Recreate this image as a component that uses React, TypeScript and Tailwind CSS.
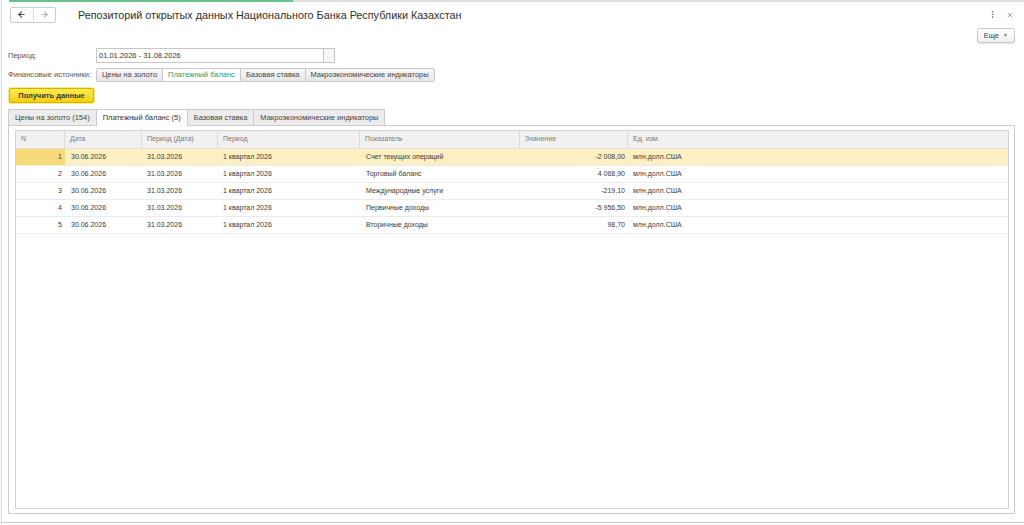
import React from 'react';
import { ArrowLeft, ArrowRight, EllipsisVertical, X } from 'lucide-react';

const sources = ['Цены на золото', 'Платежный баланс', 'Базовая ставка', 'Макроэкономические индикаторы'];

const tabs = ['Цены на золото (154)', 'Платежный баланс (5)', 'Базовая ставка', 'Макроэкономические индикаторы'];

const rows = [
  { n: 1, date: '30.06.2026', pdate: '31.03.2026', period: '1 квартал 2026', name: 'Счет текущих операций', value: '-2 008,00' },
  { n: 2, date: '30.06.2026', pdate: '31.03.2026', period: '1 квартал 2026', name: 'Торговый баланс', value: '4 068,90' },
  { n: 3, date: '30.06.2026', pdate: '31.03.2026', period: '1 квартал 2026', name: 'Международные услуги', value: '-219,10' },
  { n: 4, date: '30.06.2026', pdate: '31.03.2026', period: '1 квартал 2026', name: 'Первичные доходы', value: '-5 956,50' },
  { n: 5, date: '30.06.2026', pdate: '31.03.2026', period: '1 квартал 2026', name: 'Вторичные доходы', value: '98,70' },
];

// column widths: N, Дата, Период (Дата), Период, Показатель, Значение, Ед. изм.
const cols = 'grid grid-cols-[49px_77px_76px_142px_160px_108px_1fr]';

export default function App() {
  return (
    <div
      className="relative w-[1024px] h-[525px] bg-white overflow-hidden flex flex-col text-[#3c3c3c]"
      style={{ fontFamily: '"Liberation Sans", Arial, sans-serif' }}
    >
      {/* left yellow edge */}
      <div className="absolute left-[1px] top-0 bottom-0 w-[1px] bg-[#efdf86]"></div>

      {/* top strip */}
      <div className="flex h-[2px] shrink-0">
        <div className="w-[9px]"></div>
        <div className="w-[284px] bg-[#6cc08d]"></div>
        <div className="flex-1 bg-[#dedede]"></div>
      </div>

      <div className="flex-1 flex flex-col pl-[8px] pr-[9px]">
        {/* header */}
        <div className="flex items-center h-[19px] mt-[3px]">
          <div className="ml-[2px] flex w-[46px] h-[16px] border border-[#cccccc] rounded-[2px] bg-white">
            <div className="flex-1 flex items-center justify-center border-r border-[#dddddd]">
              <ArrowLeft size={9} strokeWidth={3} className="text-[#4a4a4a]" />
            </div>
            <div className="flex-1 flex items-center justify-center">
              <ArrowRight size={9} strokeWidth={3} className="text-[#b5b5b5]" />
            </div>
          </div>
          <div className="ml-[22px] text-[10.8px] text-[#2f2f2f] pt-[1px]">
            Репозиторий открытых данных Национального Банка Республики Казахстан
          </div>
          <div className="ml-auto flex items-center gap-[9px] mr-[1px]">
            <EllipsisVertical size={9} strokeWidth={2.5} className="text-[#777777]" />
            <X size={8} strokeWidth={2} className="text-[#777777]" />
          </div>
        </div>

        {/* Еще */}
        <div className="flex justify-end mt-[4px]">
          <div className="flex items-center h-[15px] px-[6px] gap-[4px] border border-[#c9c9c9] rounded-[2px] bg-gradient-to-b from-white to-[#efefef] text-[7.5px] text-[#444444] shadow-[0_1px_1px_rgba(0,0,0,0.08)]">
            Еще
            <span className="text-[5px] text-[#777777]">▼</span>
          </div>
        </div>

        {/* Период */}
        <div className="flex items-center mt-[5px] h-[15px]">
          <div className="w-[88px] text-[7.5px] text-[#555555]">Период:</div>
          <div className="flex h-[15px]">
            <div className="w-[228px] border border-[#c6c6c6] bg-white flex items-center px-[2px] text-[7.5px] text-[#333333]">
              01.01.2026 - 31.08.2026
            </div>
            <div className="w-[11px] border border-l-0 border-[#c6c6c6] bg-[#f7f7f7] flex items-center justify-center text-[6px] text-[#999999] leading-none">
              ...
            </div>
          </div>
        </div>

        {/* Финансовые источники */}
        <div className="flex items-center mt-[5px] h-[14px]">
          <div className="w-[88px] text-[7.5px] text-[#555555]">Финансовые источники:</div>
          <div className="flex h-[14px] border border-[#c8c8c8] rounded-[2px]">
            {sources.map((s, i) => (
              <div
                key={s}
                className={
                  'flex items-center px-[5px] text-[7.5px] ' +
                  (i > 0 ? 'border-l border-[#c8c8c8] ' : '') +
                  (i === 1 ? 'bg-white text-[#2e9b57]' : 'bg-gradient-to-b from-[#f7f7f7] to-[#e6e6e6] text-[#444444]')
                }
              >
                {s}
              </div>
            ))}
          </div>
        </div>

        {/* Получить данные */}
        <div className="mt-[5px] flex">
          <div className="p-[1px] rounded-[2px] bg-[#f6ec9e]">
            <div className="h-[15px] w-[85px] flex items-center justify-center rounded-[2px] border border-[#d6b200] bg-gradient-to-b from-[#ffec4d] to-[#f3cf00] text-[7.5px] font-bold text-[#3a3a3a]">
              Получить данные
            </div>
          </div>
        </div>

        {/* tabs */}
        <div className="flex mt-[5px] h-[16px] items-end">
          {tabs.map((t, i) => (
            <div
              key={t}
              className={
                'h-[16px] flex items-center px-[6px] text-[7.5px] border-t border-r border-[#cccccc] ' +
                (i === 0 ? 'border-l ' : '') +
                (i === 1 ? 'bg-white text-[#333333] h-[17px] -mb-[1px] relative z-10' : 'bg-[#ececec] text-[#444444]')
              }
            >
              {t}
            </div>
          ))}
        </div>

        {/* panel */}
        <div className="flex-1 border border-[#cccccc] bg-white pt-[4px] pl-[6px] pr-[5px] pb-[4px] mb-[8px] flex">
          <div className="flex-1 border border-[#d4d4d4] bg-white flex flex-col">
            <div className={cols + ' h-[18px] bg-[#f1f1f1] border-b border-[#e0e0e0] text-[7px] text-[#7a7a7a]'}>
              {['N', 'Дата', 'Период (Дата)', 'Период', 'Показатель', 'Значение', 'Ед. изм.'].map((h, i) => (
                <div key={h} className={'flex items-center pl-[5px] ' + (i < 6 ? 'border-r border-[#dcdcdc]' : '')}>
                  {h}
                </div>
              ))}
            </div>
            {rows.map((r) => {
              const sel = r.n === 1;
              return (
                <div
                  key={r.n}
                  className={cols + ' h-[17px] border-b border-[#ebebeb] text-[7px] text-[#3a3a3a] ' + (sel ? 'bg-[#fcefc2]' : 'bg-white')}
                >
                  <div className={'flex items-center justify-end pr-[3px] ' + (sel ? 'bg-[#f8d978]' : '')}>{r.n}</div>
                  <div className="flex items-center pl-[6px]">{r.date}</div>
                  <div className="flex items-center pl-[5px]">{r.pdate}</div>
                  <div className="flex items-center pl-[5px]">{r.period}</div>
                  <div className="flex items-center pl-[6px]">{r.name}</div>
                  <div className="flex items-center justify-end pr-[3px]">{r.value}</div>
                  <div className="flex items-center pl-[5px]">млн.долл.США</div>
                </div>
              );
            })}
          </div>
        </div>
      </div>

      {/* bottom border */}
      <div className="h-[1px] bg-[#cfcfcf] shrink-0"></div>
      <div className="h-[2px] shrink-0"></div>
    </div>
  );
}
